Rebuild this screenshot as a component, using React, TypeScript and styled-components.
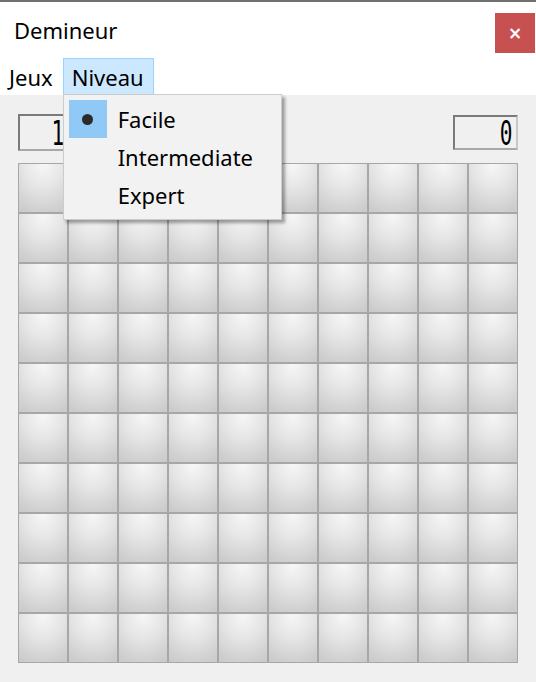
import React from "react";
import styled, { createGlobalStyle } from "styled-components";

const Global = createGlobalStyle`
  html, body { margin: 0; padding: 0; background: #f0f0f0; }
  body { font-family: "Noto Sans", "Open Sans", sans-serif; }
  * { box-sizing: border-box; }
`;

const Window = styled.div`
  width: 536px;
  height: 682px;
  display: flex;
  flex-direction: column;
  background: #f0f0f0;
  overflow: hidden;
`;

const TitleBar = styled.div`
  height: 57px;
  flex: none;
  background: #ffffff;
  border-top: 2px solid #707070;
  display: flex;
  align-items: flex-start;
  justify-content: space-between;
  padding: 11px 1px 0 14px;
`;

const Title = styled.div`
  font-size: 22px;
  line-height: 28px;
  margin-top: 3px;
  color: #000;
`;

const CloseButton = styled.div`
  width: 40px;
  height: 40px;
  background: #c75050;
  color: #fff;
  display: flex;
  align-items: center;
  justify-content: center;
  font-family: "DejaVu Sans", sans-serif;
  font-size: 17px;
  font-weight: bold;
`;

const MenuBar = styled.div`
  height: 38px;
  flex: none;
  background: #ffffff;
  display: flex;
  align-items: stretch;
  padding: 1px 0 0 0;
  position: relative;
  z-index: 2;
`;

const MenuItem = styled.div<{ $open?: boolean }>`
  position: relative;
  display: flex;
  align-items: center;
  padding: 0 9px 0 8px;
  font-size: 22px;
  color: #000;
  border: 1px solid ${(p) => (p.$open ? "#99d1ff" : "transparent")};
  background: ${(p) => (p.$open ? "#cce8ff" : "transparent")};
`;

const Dropdown = styled.div`
  position: absolute;
  top: 100%;
  left: -1px;
  width: 219px;
  background: #f2f2f2;
  border: 1px solid #cccccc;
  box-shadow: 3px 3px 3px rgba(0, 0, 0, 0.35);
  padding: 5px;
  display: flex;
  flex-direction: column;
`;

const DropItem = styled.div`
  height: 38px;
  display: flex;
  align-items: center;
  font-size: 22px;
  color: #000;
`;

const CheckBox = styled.div<{ $checked?: boolean }>`
  width: 38px;
  height: 38px;
  margin-right: 11px;
  display: flex;
  align-items: center;
  justify-content: center;
  background: ${(p) => (p.$checked ? "#90c8f6" : "transparent")};
`;

const Bullet = styled.div`
  width: 11px;
  height: 11px;
  border-radius: 50%;
  background: #2b2b2b;
`;

const Content = styled.div`
  flex: 1;
  background: #f0f0f0;
  padding: 19px 18px 0 18px;
  display: flex;
  flex-direction: column;
  gap: 12px;
`;

const CounterRow = styled.div`
  display: flex;
  justify-content: space-between;
  align-items: flex-start;
`;

const Counter = styled.div<{ $tall?: boolean }>`
  width: 65px;
  height: ${(p) => (p.$tall ? 37 : 35)}px;
  margin-top: ${(p) => (p.$tall ? 0 : 1)}px;
  border-top: 2px solid #7a7a7a;
  border-left: 2px solid #7a7a7a;
  border-bottom: 2px solid #a8a8a8;
  border-right: 2px solid #c8c8c8;
  background: #f0f0f0;
  display: flex;
  align-items: center;
  justify-content: flex-end;
  padding-right: 4px;
`;

const Digits = styled.span`
  font-family: "DejaVu Sans Mono", monospace;
  font-size: 34px;
  line-height: 28px;
  color: #000;
  display: inline-block;
  transform: scaleX(0.62);
  transform-origin: right center;
`;

const Board = styled.div`
  display: grid;
  grid-template-columns: repeat(10, 50px);
  grid-auto-rows: 50px;
  width: 500px;
`;

const Cell = styled.div`
  border: 1px solid #a7a7a7;
  background: radial-gradient(
    ellipse 90% 110% at 50% 0%,
    #f7f7f7 0%,
    #e6e6e6 45%,
    #d2d2d2 85%,
    #cbcbcb 100%
  );
`;

export default function App() {
  const cells = Array.from({ length: 100 }, (_, i) => i);
  return (
    <>
      <Global />
      <Window>
        <TitleBar>
          <Title>Demineur</Title>
          <CloseButton>×</CloseButton>
        </TitleBar>
        <MenuBar>
          <MenuItem>Jeux</MenuItem>
          <MenuItem $open>
            Niveau
            <Dropdown>
              <DropItem>
                <CheckBox $checked>
                  <Bullet />
                </CheckBox>
                Facile
              </DropItem>
              <DropItem>
                <CheckBox />
                Intermediate
              </DropItem>
              <DropItem>
                <CheckBox />
                Expert
              </DropItem>
            </Dropdown>
          </MenuItem>
        </MenuBar>
        <Content>
          <CounterRow>
            <Counter $tall>
              <Digits>10</Digits>
            </Counter>
            <Counter>
              <Digits>0</Digits>
            </Counter>
          </CounterRow>
          <Board>
            {cells.map((i) => (
              <Cell key={i} />
            ))}
          </Board>
        </Content>
      </Window>
    </>
  );
}
